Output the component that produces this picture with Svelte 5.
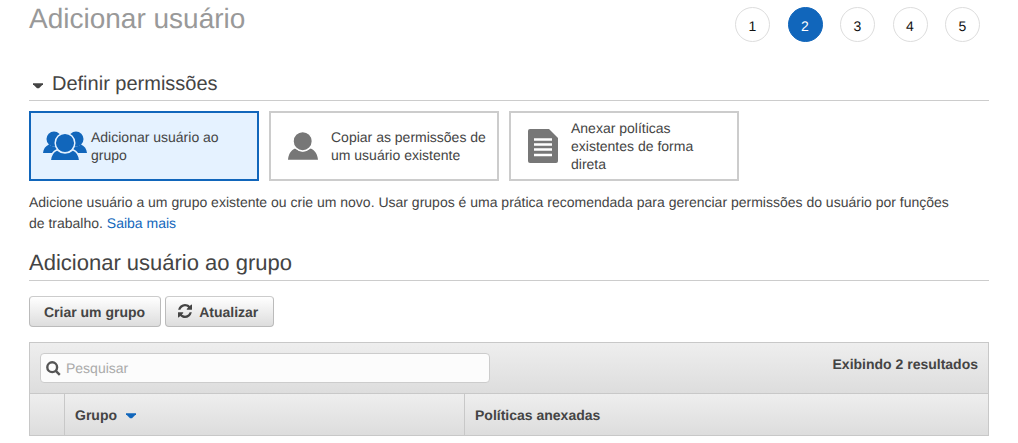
<script>
  const steps = [1, 2, 3, 4, 5];
  const current = 2;
  const options = [
    { id: 'group', label: 'Adicionar usuário ao grupo' },
    { id: 'copy', label: 'Copiar as permissões de um usuário existente' },
    { id: 'attach', label: 'Anexar políticas existentes de forma direta' }
  ];
  let selected = $state('group');
  let open = $state(true);
  let query = $state('');
</script>

<main>
  <header>
    <h1>Adicionar usuário</h1>
    <ol class="steps">
      {#each steps as step}
        <li class:current={step === current} aria-current={step === current ? 'step' : undefined}>{step}</li>
      {/each}
    </ol>
  </header>

  <h2 class="section">
    <button class="toggle" aria-expanded={open} onclick={() => (open = !open)}>
      <svg width="10" height="6" viewBox="0 0 10 6" aria-hidden="true"><path d="M0 .3h10v1L6 5.3H4L0 1.3z" /></svg>
      Definir permissões
    </button>
  </h2>

  {#if open}
    <div class="options">
      {#each options as option}
        <button
          class="option {option.id}"
          class:selected={selected === option.id}
          aria-pressed={selected === option.id}
          onclick={() => (selected = option.id)}
        >
          <span class="icon">
            {#if option.id === 'group'}
              <svg width="44" height="30" viewBox="0 0 44 30" aria-hidden="true">
                <circle cx="11" cy="8" r="7.500" />
                <circle cx="33" cy="8" r="7.500" />
                <path d="M0 22c.4-4.300 2.400-7 6-8.600q5 4 10 0L20 22zM44 22c-.4-4.300-2.400-7-6-8.600q-5 4-10 0L24 22z" />
                <g class="front">
                  <circle cx="22" cy="12" r="9.800" />
                  <path d="M7.200 29.700c.4-5.500 2.500-9 7-10.900q7.800 6.500 15.600 0c4.500 1.900 6.600 5.400 7 10.900z" />
                </g>
              </svg>
            {:else if option.id === 'copy'}
              <svg width="30" height="28" viewBox="0 0 30 28" aria-hidden="true">
                <path d="M0 27.800c.5-5.500 2.700-9.300 7.100-11.200q7.700 6 15.600 0c4.400 1.900 6.800 5.700 7.300 11.200z" />
                <circle class="head" cx="14.700" cy="9.200" r="9.700" />
              </svg>
            {:else}
              <svg width="30" height="34" viewBox="0 0 30 34" aria-hidden="true">
                <path d="M2 0h19l9 9v23a2 2 0 0 1-2 2H2a2 2 0 0 1-2-2V2a2 2 0 0 1 2-2z" />
                <path class="lines" d="M6 10.500h18M6 15.500h18M6 20.500h18M6 26h18" />
              </svg>
            {/if}
          </span>
          <span>{option.label}</span>
        </button>
      {/each}
    </div>
    <p>
      Adicione usuário a um grupo existente ou crie um novo. Usar grupos é uma prática recomendada para gerenciar
      permissões do usuário por funções de trabalho. <a href="#saiba-mais">Saiba mais</a>
    </p>
  {/if}

  <h2 class="section group-title">Adicionar usuário ao grupo</h2>

  <div class="actions">
    <button class="btn">Criar um grupo</button>
    <button class="btn refresh">
      <svg width="14" height="14" viewBox="0 0 1536 1536" aria-hidden="true">
        <path d="M1511 928q0 5-1 7-64 268-268 434.500T764 1536q-146 0-282.500-55T238 1324l-129 129q-19 19-45 19t-45-19-19-45V960q0-26 19-45t45-19h448q26 0 45 19t19 45-19 45l-137 137q71 66 161 102t187 36q134 0 250-65t186-179q11-17 53-117 8-23 30-23h192q13 0 22.500 9.500t9.500 22.500zm25-800v448q0 26-19 45t-45 19h-448q-26 0-45-19t-19-45 19-45l138-138Q969 256 768 256q-134 0-250 65T332 500q-11 17-53 117-8 23-30 23H50q-13 0-22.500-9.500T18 608v-7q65-268 270-434.500T768 0q146 0 284 55.500T1297 212l130-129q19-19 45-19t45 19 19 45z" />
      </svg>
      Atualizar
    </button>
  </div>

  <section class="grid">
    <div class="toolbar">
      <label class="search">
        <svg width="15" height="15" viewBox="0 0 15 15" role="img" aria-label="Pesquisar">
          <circle cx="6.200" cy="6.200" r="4.900" />
          <path d="M9.800 9.800l4 4" />
        </svg>
        <input type="text" placeholder="Pesquisar" bind:value={query} />
      </label>
      <strong>Exibindo 2 resultados</strong>
    </div>
    <table>
      <colgroup><col class="pick" /><col class="name" /><col /></colgroup>
      <thead>
        <tr>
          <td></td>
          <th scope="col" aria-sort="descending">
            <button class="sort">
              Grupo
              <svg width="10" height="6" viewBox="0 0 10 6" aria-hidden="true"><path d="M0 .3h10v1L6 5.3H4L0 1.3z" /></svg>
            </button>
          </th>
          <th scope="col">Políticas anexadas</th>
        </tr>
      </thead>
    </table>
  </section>
</main>

<style>
  :global(body) {
    margin: 0;
    background: #fff;
  }

  main {
    padding: 0 29px;
    font: 14px/18px 'Liberation Sans', Arial, sans-serif;
    text-rendering: geometricPrecision;
    color: #444;
  }

  button,
  input {
    font: inherit;
    color: inherit;
    text-rendering: inherit;
  }

  header {
    display: flex;
    justify-content: space-between;
    padding: 0 9px 0 0;
    height: 70px;
  }

  h1 {
    margin: 3px 0 0;
    font-size: 28px;
    line-height: 32px;
    font-weight: 400;
    color: #999;
  }

  .steps {
    display: flex;
    justify-content: space-between;
    width: 245px;
    margin: 7px 0 0;
    padding: 0;
    list-style: none;
    color: #111;
  }

  .steps li {
    box-sizing: border-box;
    width: 35px;
    height: 35px;
    padding-top: 1px;
    border: 1px solid #ddd;
    border-radius: 50%;
    line-height: 35px;
    text-align: center;
  }

  .steps .current {
    border-color: #1166bb;
    background: #1166bb;
    color: #fff;
  }

  .section {
    margin: 0;
    padding-bottom: 2px;
    border-bottom: 1px solid #ccc;
    font-size: 20px;
    line-height: 28px;
    font-weight: 400;
  }

  .toggle {
    display: flex;
    align-items: center;
    gap: 9px;
    padding: 0 0 0 4px;
    border: 0;
    background: none;
  }

  .toggle svg {
    margin-top: 4px;
    fill: #444;
  }

  .options {
    display: flex;
    flex-wrap: wrap;
    gap: 10px;
    margin-top: 10px;
  }

  .option {
    display: flex;
    align-items: center;
    box-sizing: border-box;
    width: 230px;
    min-height: 70px;
    padding: 0 8px 0 12px;
    border: 2px solid #ccc;
    background: #fff;
    text-align: left;
  }

  .option.selected {
    border-color: #1166bb;
    background: #e5f2ff;
  }

  .icon {
    display: flex;
    flex: none;
    justify-content: center;
    width: 44px;
    margin-right: 4px;
    fill: #777;
  }

  .copy,
  .attach {
    padding-left: 10px;
  }

  .copy {
    padding-right: 4px;
  }

  .copy .icon,
  .attach .icon {
    margin-right: 6px;
  }

  .selected .icon {
    fill: #1166bb;
  }

  .front,
  .head {
    stroke: #fff;
    stroke-width: 1.5;
  }

  .selected .front,
  .selected .head {
    stroke: #e5f2ff;
  }

  .lines {
    stroke: #fff;
    stroke-width: 2.5;
  }

  p {
    margin: 11px 0 0;
    padding-right: 24px;
    line-height: 21px;
  }

  a {
    color: #1166bb;
    text-decoration: none;
  }

  .group-title {
    margin-top: 15px;
    padding-bottom: 3px;
    font-size: 22px;
  }

  .actions {
    display: flex;
    gap: 4px;
    margin-top: 15px;
  }

  .btn {
    display: flex;
    align-items: center;
    gap: 7px;
    box-sizing: border-box;
    height: 31px;
    padding: 1px 15px 0 14px;
    border: 1px solid #bbb;
    border-top-color: #ccc;
    border-radius: 4px;
    background: linear-gradient(#fff, #ddd);
    font-weight: 700;
  }

  .refresh {
    padding-left: 12px;
  }

  .btn svg {
    fill: #444;
    margin-top: -2px;
  }

  .grid {
    margin-top: 15px;
    border: 1px solid #c8c8c8;
  }

  .toolbar,
  thead tr {
    background: linear-gradient(#eee, #ddd);
  }

  .toolbar {
    display: flex;
    justify-content: space-between;
    padding: 10px;
    border-bottom: 1px solid #c8c8c8;
  }

  .toolbar strong {
    margin-top: 2px;
  }

  .search {
    display: flex;
    align-items: center;
    gap: 5px;
    box-sizing: border-box;
    width: 450px;
    height: 30px;
    padding: 0 5px;
    border: 1px solid #ccc;
    border-radius: 4px;
    background: #fcfcfc;
  }

  .search svg {
    flex: none;
    fill: none;
    stroke: #555;
    stroke-width: 2.4;
  }

  input {
    flex: 1;
    min-width: 0;
    padding: 0;
    border: 0;
    outline: 0;
    background: none;
  }

  input::placeholder {
    color: #aaa;
    opacity: 1;
  }

  table {
    width: 100%;
    border-collapse: separate;
    border-spacing: 0;
    table-layout: fixed;
  }

  .pick {
    width: 34px;
  }

  .name {
    width: 400px;
  }

  th,
  td {
    height: 41px;
    padding: 0 10px;
    text-align: left;
  }

  th {
    border-left: 1px solid #c8c8c8;
  }

  .sort {
    display: flex;
    align-items: center;
    gap: 9px;
    padding: 0;
    border: 0;
    background: none;
  }

  .sort svg {
    fill: #1166bb;
    margin-top: 2px;
  }
</style>
